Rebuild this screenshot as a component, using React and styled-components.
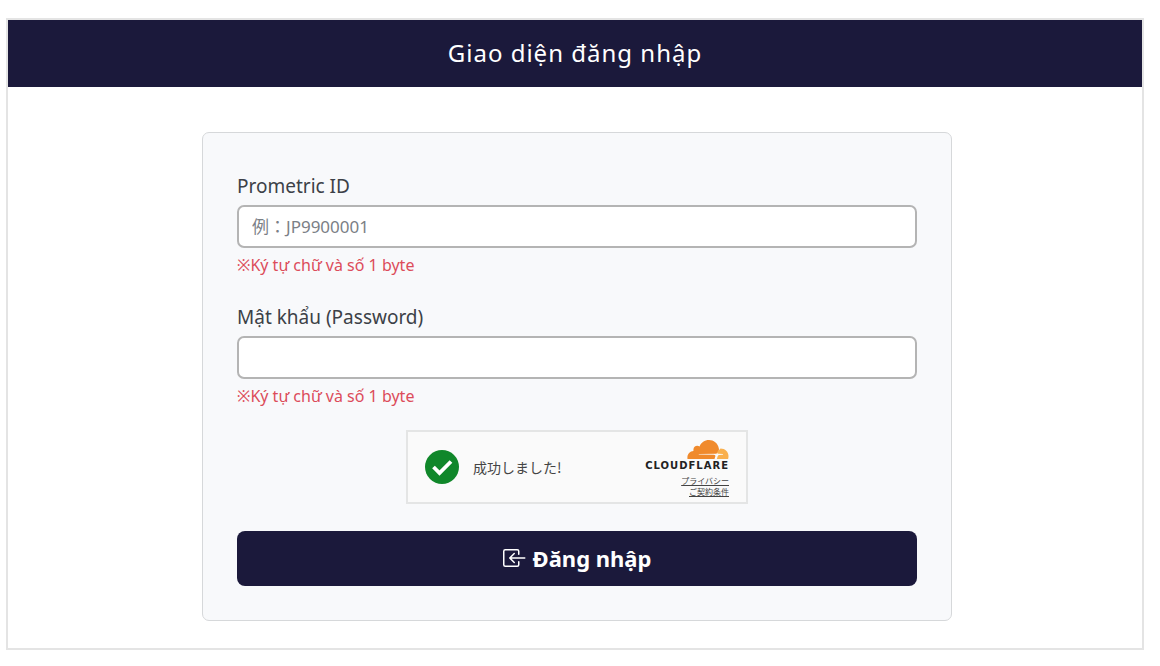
import React from "react";
import styled, { createGlobalStyle } from "styled-components";
import { BsBoxArrowInLeft } from "react-icons/bs";

const GlobalStyle = createGlobalStyle`
  * { box-sizing: border-box; }
  body {
    margin: 0;
    background: #fff;
    color: #3c4147;
    font-family: "Noto Sans", "Noto Sans CJK JP", sans-serif;
    font-size: 19px;
    line-height: 24px;
  }
  input, button { font: inherit; }
`;

const Page = styled.div`
  padding: 18px 16px 16px 6px;
`;

const Frame = styled.div`
  border: 2px solid #e4e4e4;
`;

const Header = styled.header`
  padding: 17px 16px 18px;
  background: #1b193b;
  color: #fff;
  text-align: center;
`;

const Title = styled.h1`
  margin: 0;
  font-size: 24px;
  line-height: 32px;
  font-weight: 400;
  letter-spacing: 1px;
`;

const Main = styled.main`
  padding: 45px 28px 27px 32px;
`;

const Card = styled.form`
  max-width: 750px;
  margin: 0 auto;
  padding: 41px 34px 34px;
  border: 1px solid #d6d8da;
  border-radius: 7px;
  background: #f8f9fb;
`;

const Field = styled.div`
  display: flex;
  flex-direction: column;
  margin-bottom: 29px;
`;

const Label = styled.label`
  margin-bottom: 7px;
`;

const TextInput = styled.input`
  width: 100%;
  height: 43px;
  padding: 0 13px;
  border: 2px solid #b4b4b4;
  border-radius: 7px;
  background: #fff;
  color: #3c4147;
  font-size: 17px;

  &::placeholder {
    color: #7b8086;
    opacity: 1;
  }
`;

const Hint = styled.small`
  margin-top: 6px;
  color: #dc4c5a;
  font-size: 16px;
  line-height: 22px;
`;

const Turnstile = styled.div`
  display: flex;
  align-items: center;
  gap: 14px;
  width: 342px;
  max-width: 100%;
  height: 74px;
  margin: -6px auto 27px;
  padding: 0 17px;
  border: 2px solid #e4e5e5;
  background: #fafafa;
`;

const CheckMark = styled.svg`
  flex: none;
  width: 34px;
  height: 34px;
`;

const Status = styled.span`
  flex: 1;
  color: #444;
  font-family: "Noto Sans CJK JP", sans-serif;
  font-size: 14px;
`;

const Brand = styled.div`
  display: flex;
  flex-direction: column;
  align-items: flex-end;
  padding-top: 2px;
`;

const Cloud = styled.svg`
  width: 42px;
  height: 19px;
`;

const Wordmark = styled.span`
  margin-bottom: 3px;
  color: #222;
  font-family: "DejaVu Sans", sans-serif;
  font-size: 10px;
  line-height: 13px;
  font-weight: 700;
  letter-spacing: 1px;
`;

const LegalLink = styled.a`
  color: #444;
  font-family: "Noto Sans CJK JP", sans-serif;
  font-size: 8px;
  line-height: 11px;
`;

const SubmitButton = styled.button`
  display: flex;
  align-items: center;
  justify-content: center;
  gap: 6px;
  width: 100%;
  height: 55px;
  padding: 0 0 2px;
  border: 0;
  border-radius: 8px;
  background: #1b193b;
  color: #fff;
  font-size: 22px;
  font-weight: 700;
  cursor: pointer;
`;

function CredentialField({ id, label, hint, ...inputProps }) {
  return (
    <Field>
      <Label htmlFor={id}>{label}</Label>
      <TextInput id={id} aria-describedby={`${id}-hint`} {...inputProps} />
      <Hint id={`${id}-hint`}>{hint}</Hint>
    </Field>
  );
}

export default function App() {
  return (
    <Page>
      <GlobalStyle />
      <Frame>
        <Header>
          <Title>Giao diện đăng nhập</Title>
        </Header>
        <Main>
          <Card onSubmit={(event) => event.preventDefault()}>
            <CredentialField
              id="prometric-id"
              label="Prometric ID"
              placeholder="例：JP9900001"
              hint="※Ký tự chữ và số 1 byte"
            />
            <CredentialField
              id="password"
              type="password"
              label="Mật khẩu (Password)"
              hint="※Ký tự chữ và số 1 byte"
            />
            <Turnstile>
              <CheckMark viewBox="0 0 34 34" aria-hidden="true">
                <circle cx="17" cy="17" r="17" fill="#10872a" />
                <path d="M8.500 17l6 6 11.500-11.500" fill="none" stroke="#fff" strokeWidth="3.800" />
              </CheckMark>
              <Status>成功しました!</Status>
              <Brand>
                <Cloud viewBox="0 0 42 19" aria-hidden="true">
                  <path
                    d="M27.500 19l.8-2.600c.3-1-.2-1.500-1.600-1.600L12 14.600c-.4 0-.3-.5.1-.5l17-.3c1.500-.5 2.300-1.800 2.700-3.300.3-.9.2-1.500 0-2.300C30.700 3 26.700 0 22 0c-4.300 0-8 2.600-9.400 6.400-2.600-1.800-6.200-.2-6.200 3.300 0 .5 0 .9.1 1.300C3 11.100.4 14 .4 17.500c0 .5 0 1 .1 1.500z"
                    fill="#f08a2c"
                  />
                  <path
                    d="M33.500 8.500c4.600 0 8 3.400 8 7.600 0 1-.1 1.900-.4 2.900H29.800l1-3.100c.2-.6.8-1 1.400-1l3.600-.2c.4 0 .4-.6 0-.6l-4-.3c-1.400-.1-1.900-1-1.300-2.100z"
                    fill="#f9b04e"
                  />
                </Cloud>
                <Wordmark>CLOUDFLARE</Wordmark>
                <LegalLink href="#privacy">プライバシー</LegalLink>
                <LegalLink href="#terms">ご契約条件</LegalLink>
              </Brand>
            </Turnstile>
            <SubmitButton type="submit">
              <BsBoxArrowInLeft size={24} aria-hidden="true" />
              Đăng nhập
            </SubmitButton>
          </Card>
        </Main>
      </Frame>
    </Page>
  );
}
